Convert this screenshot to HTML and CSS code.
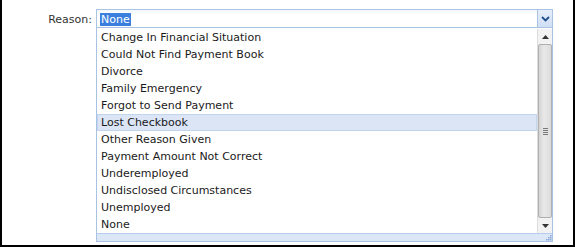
FILE: index.html
```html
<!DOCTYPE html>
<html>
<head>
<meta charset="utf-8">
<link rel="stylesheet" href="styles.css">
</head>
<body>
<div class="frame">
  <div class="field">
    <div class="label">Reason:</div>
    <div class="combo">
      <div class="input-row">
        <div class="input"><span class="sel">None</span></div>
        <div class="trigger">
          <svg width="9" height="6" viewBox="0 0 9 6"><path d="M1 1 L4.5 4.5 L8 1" fill="none" stroke="#1f4f8f" stroke-width="1.8"/></svg>
        </div>
      </div>
      <div class="list">
        <div class="list-body">
          <ul class="items">
            <li>Change In Financial Situation</li>
            <li>Could Not Find Payment Book</li>
            <li>Divorce</li>
            <li>Family Emergency</li>
            <li>Forgot to Send Payment</li>
            <li class="hover">Lost Checkbook</li>
            <li>Other Reason Given</li>
            <li>Payment Amount Not Correct</li>
            <li>Underemployed</li>
            <li>Undisclosed Circumstances</li>
            <li>Unemployed</li>
            <li>None</li>
          </ul>
          <div class="scrollbar">
            <div class="arrow up"><svg width="7" height="4" viewBox="0 0 7 4"><path d="M0 4 L3.5 0 L7 4 Z" fill="#333"/></svg></div>
            <div class="thumb"><div class="grip"><i></i><i></i><i></i><i></i></div></div>
            <div class="arrow down"><svg width="7" height="4" viewBox="0 0 7 4"><path d="M0 0 L7 0 L3.5 4 Z" fill="#333"/></svg></div>
          </div>
        </div>
        <div class="resize">
          <svg width="6" height="6" viewBox="0 0 6 6"><rect x="4" y="0" width="1.5" height="1.5" fill="#8aa9d6"/><rect x="2" y="2" width="1.5" height="1.5" fill="#8aa9d6"/><rect x="4" y="2" width="1.5" height="1.5" fill="#8aa9d6"/><rect x="0" y="4" width="1.5" height="1.5" fill="#8aa9d6"/><rect x="2" y="4" width="1.5" height="1.5" fill="#8aa9d6"/><rect x="4" y="4" width="1.5" height="1.5" fill="#8aa9d6"/></svg>
        </div>
      </div>
    </div>
  </div>
</div>
</body>
</html>
```
FILE: styles.css
```css
html, body {
  margin: 0;
  padding: 0;
  background: #fff;
}
.frame {
  width: 575px;
  height: 247px;
  box-sizing: border-box;
  border: 2px solid #000;
  border-top: 0;
  padding-top: 9px;
  font-family: "DejaVu Sans", sans-serif;
  font-size: 11px;
  color: #1a1a1a;
}
.field {
  display: flex;
  align-items: flex-start;
}
.label {
  width: 90px;
  text-align: right;
  padding-right: 4px;
  line-height: 21px;
  color: #333;
}
.combo {
  width: 457px;
}
.input-row {
  display: flex;
  height: 19px;
}
.input {
  flex: 1;
  box-sizing: border-box;
  border: 1px solid #a9c3e3;
  background: linear-gradient(#f2f6fb, #fff 5px);
  padding: 3px 0 0 3px;
  line-height: 13px;
}
.sel {
  background: #3a7fde;
  color: #fff;
  display: inline-block;
  padding: 0 1px;
}
.trigger {
  width: 15px;
  box-sizing: border-box;
  border: 1px solid #a9c3e3;
  border-left: 0;
  background: linear-gradient(#e6eefa, #cfdff4);
  display: flex;
  align-items: center;
  justify-content: center;
}
.list {
  box-sizing: border-box;
  border: 1px solid #a8c2e4;
  border-top: 0;
}
.list-body {
  display: flex;
}
.items {
  flex: 1;
  list-style: none;
  margin: 0;
  padding: 1px 0 0 0;
}
.items li {
  height: 17px;
  line-height: 17px;
  padding-left: 4px;
  box-sizing: border-box;
}
.items li.hover {
  background: #dbe5f6;
  border: 1px solid #c3d4ef;
  line-height: 15px;
  padding-left: 3px;
}
.scrollbar {
  width: 14px;
  display: flex;
  flex-direction: column;
  background: #eee;
  border-left: 1px solid #ddd;
  margin-top: 1px;
}
.arrow {
  height: 15px;
  display: flex;
  align-items: center;
  justify-content: center;
  background: #f2f2f2;
}
.thumb {
  flex: 1;
  background: linear-gradient(90deg, #d4d4d4, #e8e8e8 40%, #dcdcdc);
  border: 1px solid #b0b0b0;
  border-radius: 2px;
  display: flex;
  align-items: center;
  justify-content: center;
}
.grip {
  display: flex;
  flex-direction: column;
  gap: 1px;
}
.grip i {
  display: block;
  width: 5px;
  height: 1px;
  background: #777;
}
.resize {
  height: 7px;
  background: #dbe6f7;
  border-top: 1px solid #b7cdee;
  display: flex;
  justify-content: flex-end;
  align-items: flex-end;
}
```
